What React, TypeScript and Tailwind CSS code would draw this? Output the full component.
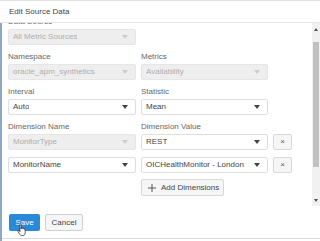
import React from 'react';

const font = { fontFamily: '"Liberation Sans", Arial, sans-serif' };

const Caret = ({ light }: { light?: boolean }) => (
  <svg width="6" height="4" viewBox="0 0 6 4" className="shrink-0">
    <path d="M0 0h6L3 4z" fill={light ? '#cccccc' : '#444'} />
  </svg>
);

const Select = ({ value, disabled }: { value: string; disabled?: boolean }) => (
  <div
    className={`flex h-[16px] items-center justify-between rounded-[2px] border pl-[4px] pr-[7px] text-[8px] ${
      disabled ? 'border-[#e6e6e6] bg-[#eeeeee] text-[#adadad]' : 'border-[#dedede] bg-white text-[#444]'
    }`}
  >
    <span className="truncate">{value}</span>
    <Caret light={disabled} />
  </div>
);

const Label = ({ children }: { children: React.ReactNode }) => (
  <div className="mb-[1px] h-[12px] text-[8px] leading-[12px] text-[#666]">{children}</div>
);

const Field = ({ label, children }: { label: string; children: React.ReactNode }) => (
  <div className="flex flex-col">
    <Label>{label}</Label>
    {children}
  </div>
);

const RemoveBtn = () => (
  <div className="flex h-[16px] w-[19px] items-center justify-center rounded-[2px] border border-[#d8d8d8] bg-[#f6f6f6] text-[8px] text-[#555]">
    ×
  </div>
);

export default function App() {
  return (
    <div style={font} className="flex h-[241px] w-[320px] flex-col overflow-hidden border-t border-[#e2e2e2] bg-white">
      {/* header */}
      <div className="flex h-[22px] shrink-0 items-center border-b border-[#e4e4e4] pl-[9px] text-[8px] text-[#444]">
        Edit Source Data
      </div>

      <div className="flex flex-1 border-l-2 border-[#8ea8cb]">
        <div className="flex flex-1 flex-col">
          {/* scroll area */}
          <div className="flex h-[183px] shrink-0">
            <div className="flex-1 overflow-hidden pl-[6px]">
              <div className="-mt-[7px] grid grid-cols-[128px_127px] gap-x-[5px] gap-y-[6px]">
                <Field label="Data Source">
                  <Select value="All Metric Sources" disabled />
                </Field>
                <div />
                <Field label="Namespace">
                  <Select value="oracle_apm_synthetics" disabled />
                </Field>
                <Field label="Metrics">
                  <Select value="Availability" disabled />
                </Field>
                <Field label="Interval">
                  <Select value="Auto" />
                </Field>
                <Field label="Statistic">
                  <Select value="Mean" />
                </Field>
              </div>
              <div className="mt-[6px] grid grid-cols-[128px_127px_19px] gap-x-[5px]">
                <Label>Dimension Name</Label>
                <Label>Dimension Value</Label>
                <div />
              </div>
              <div className="grid grid-cols-[128px_127px_19px] gap-x-[5px] gap-y-[7px]">
                <Select value="MonitorType" disabled />
                <Select value="REST" />
                <RemoveBtn />
                <Select value="MonitorName" />
                <Select value="OICHealthMonitor - London" />
                <RemoveBtn />
                <div />
                <div className="flex">
                  <div className="mt-[-1px] flex h-[17px] items-center gap-[5px] rounded-[2px] border border-[#d8d8d8] bg-[#f6f6f6] pl-[6px] pr-[4px] text-[8px] text-[#444]">
                    <svg width="8" height="8" viewBox="0 0 8 8">
                      <path d="M4 0v8M0 4h8" stroke="#555" strokeWidth="1" />
                    </svg>
                    Add Dimensions
                  </div>
                </div>
              </div>
            </div>

            {/* scrollbar */}
            <div className="flex w-[8px] shrink-0 flex-col items-center bg-[#f1f1f1] pt-[5px]">
              <svg width="4" height="3" viewBox="0 0 4 3">
                <path d="M0 3h4L2 0z" fill="#505050" />
              </svg>
              <div className="mt-[11px] h-[125px] w-[6px] bg-[#c1c1c1]" />
              <div className="flex-1" />
              <svg width="4" height="3" viewBox="0 0 4 3" className="mb-[4px]">
                <path d="M0 0h4L2 3z" fill="#505050" />
              </svg>
            </div>
          </div>

          {/* footer */}
          <div className="relative flex h-[33px] items-start gap-[5px] border-b border-[#dcdcdc] pl-[7px] pt-[8px]">
            <div className="flex h-[17px] w-[31px] items-center justify-center rounded-[2px] bg-[#2a8ad8] text-[8px] text-white">
              Save
            </div>
            <div className="flex h-[17px] w-[38px] items-center justify-center rounded-[2px] border border-[#d0d0d0] bg-[#f6f6f6] text-[8px] text-[#444]">
              Cancel
            </div>
            <svg width="10" height="14" viewBox="0 0 10 14" className="absolute left-[15px] top-[17px]">
              <path
                d="M3 1.2c0-.7 1.2-.7 1.2 0V6l.2-1c.3-.6 1.1-.6 1.2 0l.1.7c.3-.6 1.1-.5 1.2.1l.1.6c.4-.5 1.2-.3 1.2.4V10c0 1.4-.9 2.5-2.3 2.5H4.6c-.8 0-1.4-.4-1.8-1.1L1 8.5c-.4-.7.4-1.3 1-.8L3 8.7z"
                fill="#fff"
                stroke="#222"
                strokeWidth="0.7"
              />
            </svg>
          </div>
        </div>
      </div>
    </div>
  );
}
